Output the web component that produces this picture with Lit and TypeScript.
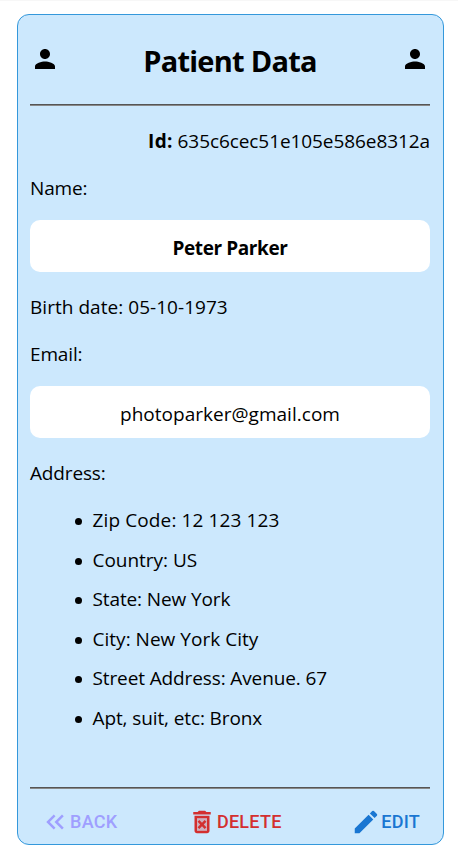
import { LitElement, html, css, svg } from "lit";

const person = html`<svg class="icon person" viewBox="0 0 24 24">
  <path d="M12 12c2.21 0 4-1.79 4-4s-1.79-4-4-4-4 1.79-4 4 1.79 4 4 4zm0 2c-2.67 0-8 1.34-8 4v2h16v-2c0-2.66-5.33-4-8-4z" />
</svg>`;

const actions = [
  {
    kind: "back",
    label: "Back",
    icon: svg`<path d="M17.59 18 19 16.59 14.42 12 19 7.41 17.59 6l-6 6z"/><path d="m11 18 1.41-1.41L7.83 12l4.58-4.59L11 6l-6 6z"/>`,
  },
  {
    kind: "delete",
    label: "Delete",
    icon: svg`<path d="M8 9h8v10H8z" opacity=".3"/><path d="M14.12 10.47 12 12.59l-2.13-2.12-1.41 1.41L10.59 14l-2.12 2.12 1.41 1.41L12 15.41l2.12 2.12 1.41-1.41L13.41 14l2.12-2.12zM15.5 4l-1-1h-5l-1 1H5v2h14V4zM6 19c0 1.1.9 2 2 2h8c1.1 0 2-.9 2-2V7H6v12zM8 9h8v10H8V9z"/>`,
  },
  {
    kind: "edit",
    label: "Edit",
    icon: svg`<path d="M3 17.25V21h3.75L17.81 9.94l-3.75-3.75L3 17.25zM20.71 7.04c.39-.39.39-1.02 0-1.41l-2.34-2.34a.9959.9959 0 0 0-1.41 0l-1.83 1.83 3.75 3.75 1.83-1.83z"/>`,
  },
];

// Text and its tracking in px.
const address: [string, number][] = [
  ["Zip Code: 12 123 123", 0.12],
  ["Country: US", -0.03],
  ["State: New York", -0.12],
  ["City: New York City", 0.02],
  ["Street Address: Avenue. 67", -0.12],
  ["Apt, suit, etc: Bronx", -0.11],
];

class AppRoot extends LitElement {
  static styles = css`
    :host {
      display: block;
      box-sizing: border-box;
      height: 864px;
      padding: 13px 14px 0 17px;
      border-top: 1px solid #f7f7f7;
      background: #fff;
      color: #000;
      font: 19px/27px "Segoe UI", "Open Sans", sans-serif;
    }
    .card {
      box-sizing: border-box;
      height: 831px;
      display: flex;
      flex-direction: column;
      padding: 0 13px 0 12px;
      border: 1px solid #3498db;
      border-radius: 12px;
      background: #cce8fd;
    }
    header {
      display: flex;
      align-items: center;
      justify-content: space-between;
      height: 89px;
    }
    h1 { margin: 3px 0 0; font-size: 29px; line-height: 40px; letter-spacing: -0.75px; }
    .icon { display: block; width: 30px; height: 30px; fill: currentColor; flex: none; }
    .person { margin-bottom: 1px; }
    .rule { height: 1px; background: #555; border-bottom: 1px solid #888; flex: none; }
    p { margin: 0 0 20px; white-space: nowrap; }
    .id { margin-top: 22px; text-align: right; letter-spacing: -0.08px; }
    .id b { letter-spacing: 0.3px; }
    .box {
      box-sizing: border-box;
      height: 52px;
      margin: -2px 0 22px;
      padding-top: 15px;
      border-radius: 10px;
      background: #fff;
      text-align: center;
    }
    .name { font-weight: 700; letter-spacing: -0.4px; }
    .mail { letter-spacing: 0.02px; }
    .date { letter-spacing: 0.04px; }
    .short { letter-spacing: -0.15px; }
    ul { margin: 0; padding: 0 0 0 45px; list-style: none; display: grid; grid-auto-rows: 39.6px; }
    li { display: flex; white-space: nowrap; }
    .dot { width: 7px; height: 7px; margin: 11px 10.5px 0 0; border-radius: 50%; background: #000; flex: none; }
    .end { margin-top: auto; }
    footer {
      display: flex;
      justify-content: space-between;
      align-items: center;
      box-sizing: border-box;
      height: 55px;
      padding: 11px 10px 0;
    }
    button {
      display: flex;
      align-items: center;
      padding: 0;
      border: 0;
      background: none;
      font: 500 18px/30px Roboto, sans-serif;
      letter-spacing: 0.27px;
      text-transform: uppercase;
    }
    .back { color: #9f9fff; }
    .delete { color: #d32f2f; }
    .edit { color: #1976d2; }
  `;

  render() {
    return html`<main class="card">
      <header>${person}<h1>Patient Data</h1>${person}</header>
      <div class="rule"></div>
      <p class="id"><b>Id:</b> 635c6cec51e105e586e8312a</p>
      <p class="short">Name:</p>
      <div class="box name">Peter Parker</div>
      <p class="date">Birth date: 05-10-1973</p>
      <p class="short">Email:</p>
      <div class="box mail">photoparker@gmail.com</div>
      <p class="short">Address:</p>
      <ul>
        ${address.map(([text, track]) => html`<li><span class="dot"></span><span style="letter-spacing:${track}px">${text}</span></li>`)}
      </ul>
      <div class="rule end"></div>
      <footer>
        ${actions.map((a) => html`<button class=${a.kind}><svg class="icon" viewBox="0 0 24 24">${a.icon}</svg>${a.label}</button>`)}
      </footer>
    </main>`;
  }
}
customElements.define("app-root", AppRoot);
